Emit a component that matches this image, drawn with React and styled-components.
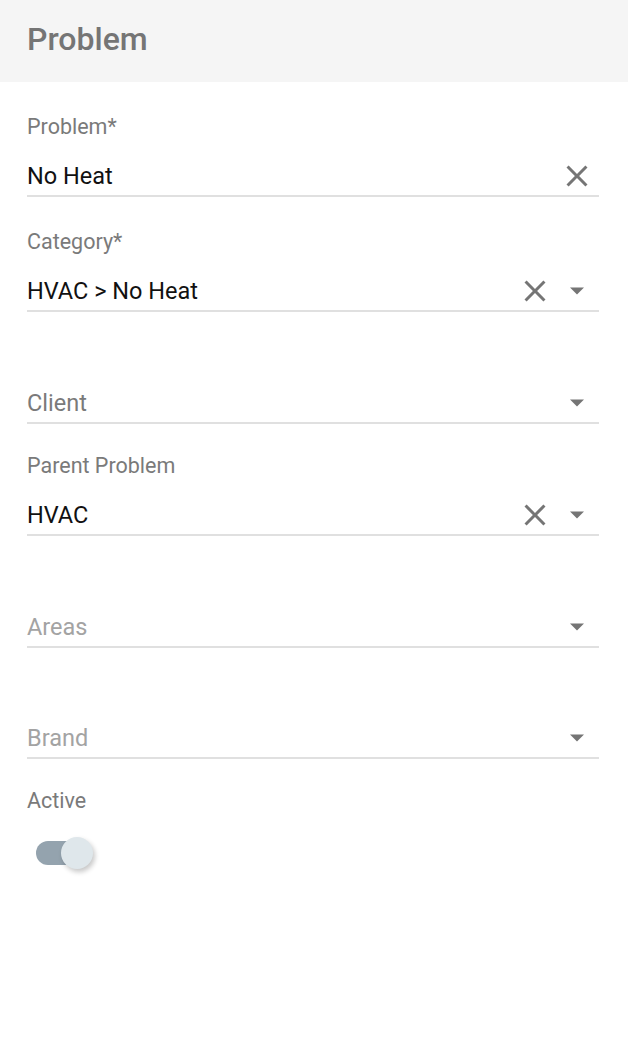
import styled, { createGlobalStyle } from "styled-components";

const GlobalStyle = createGlobalStyle`
  html, body {
    margin: 0;
    padding: 0;
    background: #ffffff;
    font-family: Roboto, "Liberation Sans", Arial, sans-serif;
  }
`;

const CloseIcon = () => (
  <svg width="36" height="36" viewBox="0 0 24 24" fill="#757575">
    <path d="M19 6.41L17.59 5 12 10.59 6.41 5 5 6.41 10.59 12 5 17.59 6.41 19 12 13.41 17.59 19 19 17.59 13.41 12z" />
  </svg>
);

const ArrowIcon = () => (
  <svg width="16" height="10" viewBox="0 0 16 10" fill="#757575">
    <polygon points="1,1.5 15,1.5 8,8.5" />
  </svg>
);

// pad = space above the label, so the rows land where the form puts them
const fields = [
  { label: "Problem*", value: "No Heat", clear: true, pad: 33 },
  { label: "Category*", value: "HVAC > No Heat", clear: true, select: true, pad: 33 },
  { placeholder: "Client", select: true, dark: true, pad: 30 },
  { label: "Parent Problem", value: "HVAC", clear: true, select: true, pad: 30 },
  { placeholder: "Areas", select: true, pad: 30 },
  { placeholder: "Brand", select: true, pad: 29 },
];

const App = () => {
  return (
    <Page>
      <GlobalStyle />
      <Header>
        <Title>Problem</Title>
      </Header>
      <Form>
        {fields.map((f, i) => (
          <Field key={i} $pad={f.pad}>
            <Label>{f.label || ""}</Label>
            <InputRow>
              {f.value ? (
                <Value>{f.value}</Value>
              ) : (
                <Placeholder $dark={f.dark}>{f.placeholder}</Placeholder>
              )}
              <Icons>
                {f.clear && (
                  <IconSlot>
                    <CloseIcon />
                  </IconSlot>
                )}
                {f.select && (
                  <IconSlot>
                    <ArrowIcon />
                  </IconSlot>
                )}
              </Icons>
            </InputRow>
          </Field>
        ))}
        <ToggleField>
          <Label>Active</Label>
          <Switch>
            <Track />
            <Thumb />
          </Switch>
        </ToggleField>
      </Form>
    </Page>
  );
};

export default App;

const Page = styled.div`
  width: 628px;
  min-height: 1042px;
  background: #ffffff;
`;

const Header = styled.div`
  height: 82px;
  background: #f5f5f5;
  display: flex;
  align-items: center;
  padding: 0 27px;
  box-sizing: border-box;
`;

const Title = styled.h1`
  margin: 0 0 4px;
  font-size: 32px;
  font-weight: 500;
  color: #757575;
`;

const Form = styled.div`
  padding: 0 29px 0 27px;
`;

const Field = styled.div`
  padding-top: ${(p) => p.$pad}px;
  border-bottom: 2px solid #e0e0e0;
`;

const Label = styled.div`
  height: 24px;
  line-height: 24px;
  font-size: 21.5px;
  color: #7a7a7a;
  white-space: nowrap;
`;

const InputRow = styled.div`
  margin-top: 17px;
  height: 39px;
  display: flex;
  align-items: center;
  justify-content: space-between;
`;

const Value = styled.div`
  font-size: 23.5px;
  color: #111111;
`;

const Placeholder = styled.div`
  font-size: 23.5px;
  color: ${(p) => (p.$dark ? "#7a7a7a" : "#a3a3a3")};
`;

const Icons = styled.div`
  display: flex;
  align-items: center;
  gap: 6px;
  margin-right: 4px;
`;

const IconSlot = styled.div`
  width: 36px;
  height: 36px;
  display: flex;
  align-items: center;
  justify-content: center;
`;

const ToggleField = styled.div`
  padding-top: 30px;
`;

const Switch = styled.div`
  position: relative;
  margin: 24px 0 0 9px;
  width: 58px;
  height: 32px;
`;

const Track = styled.div`
  position: absolute;
  left: 0;
  top: 4px;
  width: 50px;
  height: 24px;
  border-radius: 12px;
  background: #94a3ae;
`;

const Thumb = styled.div`
  position: absolute;
  left: 25px;
  top: 0;
  width: 32px;
  height: 32px;
  border-radius: 50%;
  background: #dfe7eb;
  box-shadow: 2px 3px 5px rgba(0, 0, 0, 0.22);
`;
